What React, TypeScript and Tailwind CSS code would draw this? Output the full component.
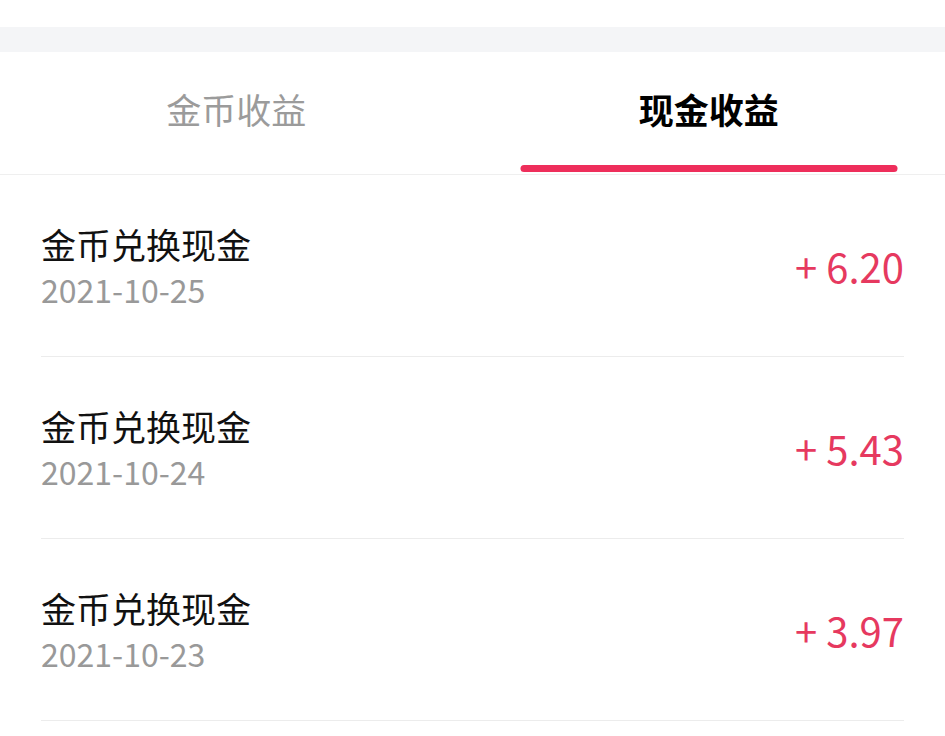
const records = [
  { title: '金币兑换现金', date: '2021-10-25', amount: '6.20' },
  { title: '金币兑换现金', date: '2021-10-24', amount: '5.43' },
  { title: '金币兑换现金', date: '2021-10-23', amount: '3.97' },
]

export default function App() {
  return (
    <div className="w-[945px] h-[736px] overflow-hidden bg-white font-['Noto_Sans_CJK_SC','Noto_Sans',sans-serif]">
      {/* top area */}
      <div className="h-[27px] bg-white" />
      <div className="h-[25px] bg-[#f4f5f7]" />

      {/* tabs */}
      <div className="flex h-[123px] border-b border-[#efefef]">
        <div className="flex-1 flex items-center justify-center pb-[7px]">
          <span className="text-[35px] text-[#9b9b9b]">金币收益</span>
        </div>
        <div className="flex-1 relative flex items-center justify-center pb-[7px]">
          <span className="text-[35px] font-bold text-black">现金收益</span>
          <div className="absolute bottom-[2px] left-1/2 -translate-x-1/2 w-[377px] h-[7px] rounded-full bg-[#ee2e5b]" />
        </div>
      </div>

      {/* list */}
      <div className="px-[41px]">
        {records.map((r) => (
          <div
            key={r.date}
            className="h-[182px] flex items-center justify-between border-b border-[#ececec]"
          >
            <div className="flex flex-col">
              <span className="text-[35px] leading-[46px] text-[#111]">{r.title}</span>
              <span className="mt-[1px] text-[32px] leading-[42px] text-[#999]">{r.date}</span>
            </div>
            <span className="text-[40px] text-[#e6395f]">+ {r.amount}</span>
          </div>
        ))}
      </div>
    </div>
  )
}
